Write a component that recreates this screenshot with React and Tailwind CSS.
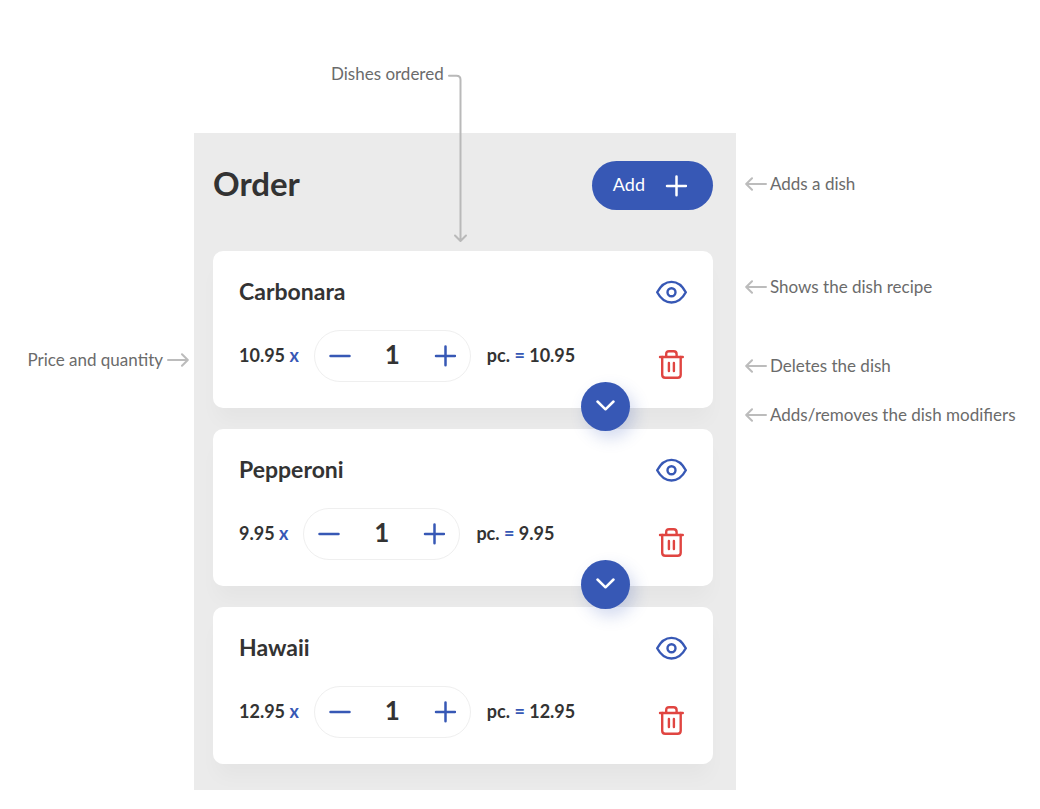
import { useState } from "react";

const DISHES = [
  { name: "Carbonara", price: 10.95, modifiers: true },
  { name: "Pepperoni", price: 9.95, modifiers: true },
  { name: "Hawaii", price: 12.95, modifiers: false },
];

function Arrow({ flip }) {
  return (
    <svg
      className={flip ? "shrink-0 rotate-180" : "shrink-0"}
      width="22"
      height="16"
      viewBox="0 0 22 16"
      fill="none"
      stroke="#bcbcbc"
      strokeWidth="2"
      strokeLinecap="round"
      strokeLinejoin="round"
      aria-hidden="true"
    >
      <path d="M21 8H1.5M7 2.2L1.2 8L7 13.8" />
    </svg>
  );
}

function Note({ children }) {
  return (
    <p className="flex items-center gap-[3px] leading-6 whitespace-nowrap">
      <Arrow />
      {children}
    </p>
  );
}

function Connector() {
  return (
    <svg
      className="absolute top-[73px] left-[253px] z-10"
      width="22"
      height="170"
      viewBox="0 0 22 170"
      fill="none"
      stroke="#b9b9b9"
      strokeWidth="2"
      strokeLinecap="round"
      strokeLinejoin="round"
      aria-hidden="true"
    >
      <path d="M2 2.700H9.500Q13.500 2.700 13.500 6.700V167M8 162.500L13.500 168L19 162.500" />
    </svg>
  );
}

function Plus() {
  return (
    <svg width="22" height="22" viewBox="0 0 22 22" fill="none" stroke="currentColor" strokeWidth="2.5" strokeLinecap="round" aria-hidden="true">
      <path d="M11.500 1.500V20.300M2 10.900H21" />
    </svg>
  );
}

function Minus() {
  return (
    <svg width="22" height="22" viewBox="0 0 22 22" fill="none" stroke="currentColor" strokeWidth="2.5" strokeLinecap="round" aria-hidden="true">
      <path d="M1.500 10.900H20.500" />
    </svg>
  );
}

function Eye() {
  return (
    <svg width="32" height="24" viewBox="0 0 32 24" fill="none" stroke="currentColor" strokeWidth="2.4" strokeLinejoin="round" aria-hidden="true">
      <path d="M2.200 12.300C5.500 6 10.500 1.900 16.500 1.900S27.500 6 30.800 12.300C27.500 18.500 22.500 22.500 16.500 22.500S5.500 18.500 2.200 12.300Z" />
      <circle cx="16.500" cy="12.300" r="4" />
    </svg>
  );
}

function Trash() {
  return (
    <svg width="26" height="30" viewBox="0 0 26 30" fill="none" stroke="currentColor" strokeWidth="2.4" strokeLinecap="round" strokeLinejoin="round" aria-hidden="true">
      <path d="M2 8H24.800" />
      <path d="M8.200 7.700V5.200Q8.200 2.300 11.100 2.300H15.700Q18.600 2.300 18.600 5.200V7.700" />
      <path d="M4.200 8V25.700Q4.200 28.700 7.200 28.700H19.700Q22.700 28.700 22.700 25.700V8" />
      <path d="M10.900 14V22M15.900 14V22" />
    </svg>
  );
}

function DishCard({ name, price, modifiers }) {
  const [qty, setQty] = useState(1);
  const id = "qty-" + name;
  return (
    <li className="relative flex justify-between rounded-[10px] bg-white px-[26px] pt-[26px] pb-[26px] shadow-[0_16px_20px_-4px_rgba(0,0,0,0.03)]">
      <div>
        <h2 className="text-[23px] leading-7 font-bold">{name}</h2>
        <div className="mt-[25px] flex items-center text-lg leading-6 font-bold">
          <label htmlFor={id} className="pb-[3px]">
            {price.toFixed(2)} <span className="text-[#3758b5]">x</span>
          </label>
          <div className="mr-4 ml-[15px] flex h-[52px] w-[157px] items-center justify-between rounded-full border border-[#efefef] px-[14px] text-[#3758b5]">
            <button type="button" aria-label="Decrease quantity" onClick={() => setQty(Math.max(1, qty - 1))}>
              <Minus />
            </button>
            <input
              id={id}
              type="text"
              inputMode="numeric"
              value={qty}
              onChange={(e) => setQty(Number(e.target.value) || 1)}
              className="w-12 bg-transparent pb-1 text-center text-[26px] leading-8 font-bold text-[#333333] outline-none"
            />
            <button type="button" aria-label="Increase quantity" onClick={() => setQty(qty + 1)}>
              <Plus />
            </button>
          </div>
          <span className="pb-[3px]">
            pc. <span className="text-[#3758b5]">=</span> {(price * qty).toFixed(2)}
          </span>
        </div>
      </div>
      <div className="flex flex-col items-center gap-[45px] pt-[3px]">
        <button type="button" aria-label="Show recipe" className="text-[#3758b5]">
          <Eye />
        </button>
        <button type="button" aria-label="Delete dish" className="text-[#e04541]">
          <Trash />
        </button>
      </div>
      {modifiers && (
        <button
          type="button"
          aria-label="Dish modifiers"
          className="absolute right-[83px] -bottom-[23px] z-10 flex size-[49px] items-center justify-center rounded-full bg-[#3758b5] pb-0.5 text-white shadow-[5px_7px_16px_rgba(55,88,181,0.22)]"
        >
          <svg width="20" height="12" viewBox="0 0 20 12" fill="none" stroke="currentColor" strokeWidth="2.500" strokeLinecap="round" strokeLinejoin="round" aria-hidden="true">
            <path d="M1.500 1.500L9.500 9.300L17.500 1.500" />
          </svg>
        </button>
      )}
    </li>
  );
}

export default function App() {
  return (
    <main className="grid min-h-screen grid-cols-[194px_minmax(0,1fr)_304px] items-start bg-white font-['Lato',sans-serif] text-[17px] text-[#6b6b6b]">
      <p className="flex items-center justify-end gap-1 pt-[348px] pr-[5px] leading-6 whitespace-nowrap">
        Price and quantity
        <Arrow flip />
      </p>

      <div className="relative">
        <p className="pt-[62px] pb-[47px] pl-[137px] leading-6">Dishes ordered</p>
        <Connector />
        <section className="bg-[#ebebeb] pt-7 pr-[23px] pb-[26px] pl-[19px] text-[#333333]">
          <header className="flex items-start justify-between pb-[41px]">
            <h1 className="text-[33px] leading-[44px] font-bold">Order</h1>
            <button type="button" className="flex h-[49px] items-center gap-5 rounded-full bg-[#3758b5] pr-[26px] pl-[21px] text-lg text-white">
              <span className="pb-[3px]">Add</span>
              <Plus />
            </button>
          </header>
          <ul className="flex flex-col gap-[21px]">
            {DISHES.map((dish) => (
              <DishCard key={dish.name} {...dish} />
            ))}
          </ul>
        </section>
      </div>

      <div className="pt-[172px] pl-[9px]">
        <Note>Adds a dish</Note>
        <div className="mt-[79px] flex flex-col">
          <Note>Shows the dish recipe</Note>
        </div>
        <div className="mt-[55px] flex flex-col gap-[25px]">
          <Note>Deletes the dish</Note>
          <Note>Adds/removes the dish modifiers</Note>
        </div>
      </div>
    </main>
  );
}
